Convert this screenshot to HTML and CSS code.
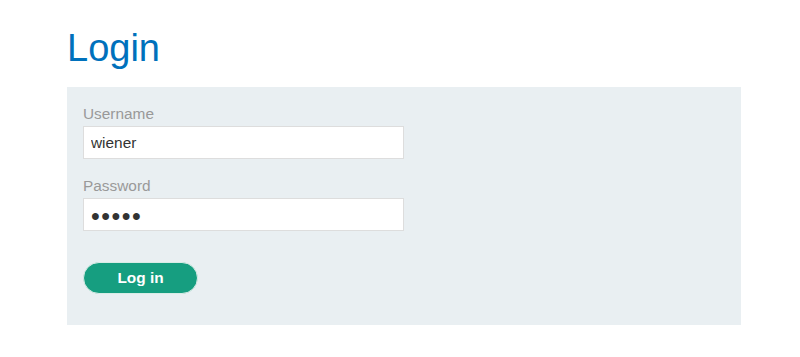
FILE: index.html
```html
<!DOCTYPE html>
<html lang="en">
<head>
    <meta charset="UTF-8">
    <meta name="viewport" content="width=device-width, initial-scale=1.0">
    <title>Login</title>
    <link rel="stylesheet" href="styles.css">
</head>
<body>
    <div class="container">
        <h1>Login</h1>
        <section class="login-panel">
            <form class="login-form" method="POST" action="/login">
                <div class="form-group">
                    <label for="username">Username</label>
                    <input type="text" id="username" name="username" value="wiener">
                </div>
                <div class="form-group">
                    <label for="password">Password</label>
                    <input type="password" id="password" name="password" value="peter">
                </div>
                <button type="submit" class="login-button">Log in</button>
            </form>
        </section>
    </div>
</body>
</html>
```

FILE: styles.css
```css
body {
    margin: 0;
    background-color: #ffffff;
    font-family: "Liberation Sans", Arial, sans-serif;
    font-size: 15.4px;
    color: #333333;
}
.container {
    width: 674px;
    padding: 23px 0 0 67px;
}
h1 {
    margin: 0 0 14px 0;
    font-size: 38px;
    font-weight: normal;
    line-height: 50px;
    color: #0071bc;
}
.login-panel {
    background-color: #e9eff2;
    padding: 17px 16px 31px 16px;
}
.form-group {
    margin-bottom: 17px;
}
label {
    display: block;
    line-height: 20px;
    margin-bottom: 2px;
    color: #999999;
}
input {
    display: block;
    box-sizing: border-box;
    width: 321px;
    height: 33px;
    padding: 0 7px;
    border: 1px solid #dddddd;
    background-color: #ffffff;
    font-family: inherit;
    font-size: 15.4px;
    color: #333333;
    outline: none;
}
input[type="password"] {
    font-size: 25px;
    letter-spacing: 1.5px;
    padding: 4px 7px 0 7px;
}
.login-button {
    display: block;
    margin-top: 31px;
    width: 115px;
    height: 32px;
    border: 1px solid #d8ece6;
    border-radius: 16px;
    background-color: #169e80;
    color: #ffffff;
    font-family: inherit;
    font-size: 15.4px;
    font-weight: bold;
    cursor: pointer;
}
.login-button:hover {
    background-color: #128569;
}
```
